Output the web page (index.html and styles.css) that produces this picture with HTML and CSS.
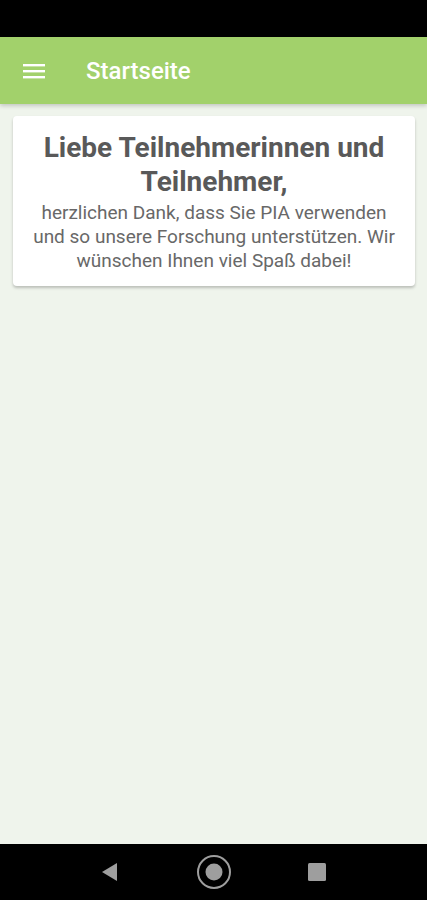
FILE: index.html
```html
<!DOCTYPE html>
<html lang="de">
<head>
    <meta charset="UTF-8">
    <meta name="viewport" content="width=device-width, initial-scale=1.0">
    <title>PIA - Startseite</title>
    <link rel="stylesheet" href="styles.css">
</head>
<body>
    <div class="phone">
        <!-- Statusleiste -->
        <div class="status-bar"></div>

        <!-- Kopfzeile -->
        <header class="toolbar">
            <button class="menu-button" aria-label="Menü">
                <svg width="22" height="16" viewBox="0 0 22 16">
                    <rect x="0" y="1" width="22" height="2.4" fill="#ffffff"/>
                    <rect x="0" y="7" width="22" height="2.4" fill="#ffffff"/>
                    <rect x="0" y="13" width="22" height="2.4" fill="#ffffff"/>
                </svg>
            </button>
            <span class="toolbar-title">Startseite</span>
        </header>

        <!-- Inhalt -->
        <main class="content">
            <div class="card">
                <h1>Liebe Teilnehmerinnen und Teilnehmer,</h1>
                <p>herzlichen Dank, dass Sie PIA verwenden und so unsere Forschung unterstützen. Wir wünschen Ihnen viel Spaß dabei!</p>
            </div>
        </main>

        <!-- Navigationsleiste -->
        <nav class="nav-bar">
            <svg class="nav-back" width="20" height="20" viewBox="0 0 20 20">
                <polygon points="17,1 17,19 2,10" fill="#9e9e9e"/>
            </svg>
            <svg class="nav-home" width="36" height="36" viewBox="0 0 36 36">
                <circle cx="18" cy="18" r="16" fill="none" stroke="#9e9e9e" stroke-width="2"/>
                <circle cx="18" cy="18" r="8.5" fill="#9e9e9e"/>
            </svg>
            <svg class="nav-recent" width="20" height="20" viewBox="0 0 20 20">
                <rect x="1" y="1" width="18" height="18" rx="1.5" fill="#9e9e9e"/>
            </svg>
        </nav>
    </div>
</body>
</html>
```

FILE: styles.css
```css
html, body {
    margin: 0;
    padding: 0;
}
body {
    font-family: Roboto, "Liberation Sans", Arial, sans-serif;
    background-color: #000000;
}
.phone {
    display: flex;
    flex-direction: column;
    width: 427px;
    height: 900px;
    background-color: #eff4ec;
}
.status-bar {
    height: 37px;
    background-color: #000000;
    flex-shrink: 0;
}
.toolbar {
    display: flex;
    align-items: center;
    height: 67px;
    flex-shrink: 0;
    background-color: #a2d16b;
    box-shadow: 0 2px 4px rgba(0, 0, 0, 0.18);
    position: relative;
    z-index: 1;
}
.menu-button {
    display: flex;
    align-items: center;
    justify-content: center;
    background: none;
    border: none;
    padding: 0;
    margin-left: 23px;
    width: 22px;
    height: 22px;
    cursor: pointer;
}
.toolbar-title {
    margin-left: 41px;
    font-size: 24px;
    font-weight: 500;
    color: #ffffff;
}
.content {
    flex: 1;
    padding: 12px 12px 0 13px;
}
.card {
    background: #ffffff;
    border-radius: 4px;
    box-shadow: 0 2px 3px rgba(0, 0, 0, 0.22);
    padding: 15px 18px 13px;
    text-align: center;
}
.card h1 {
    margin: 0 0 2px;
    font-size: 28px;
    line-height: 34px;
    font-weight: bold;
    color: #595959;
}
.card p {
    margin: 0;
    font-size: 19px;
    line-height: 24px;
    color: #686868;
}
.nav-bar {
    display: flex;
    align-items: center;
    height: 56px;
    flex-shrink: 0;
    background-color: #000000;
}
.nav-back {
    margin-left: 100px;
}
.nav-home {
    margin-left: 76px;
}
.nav-recent {
    margin-left: 75px;
}
```
